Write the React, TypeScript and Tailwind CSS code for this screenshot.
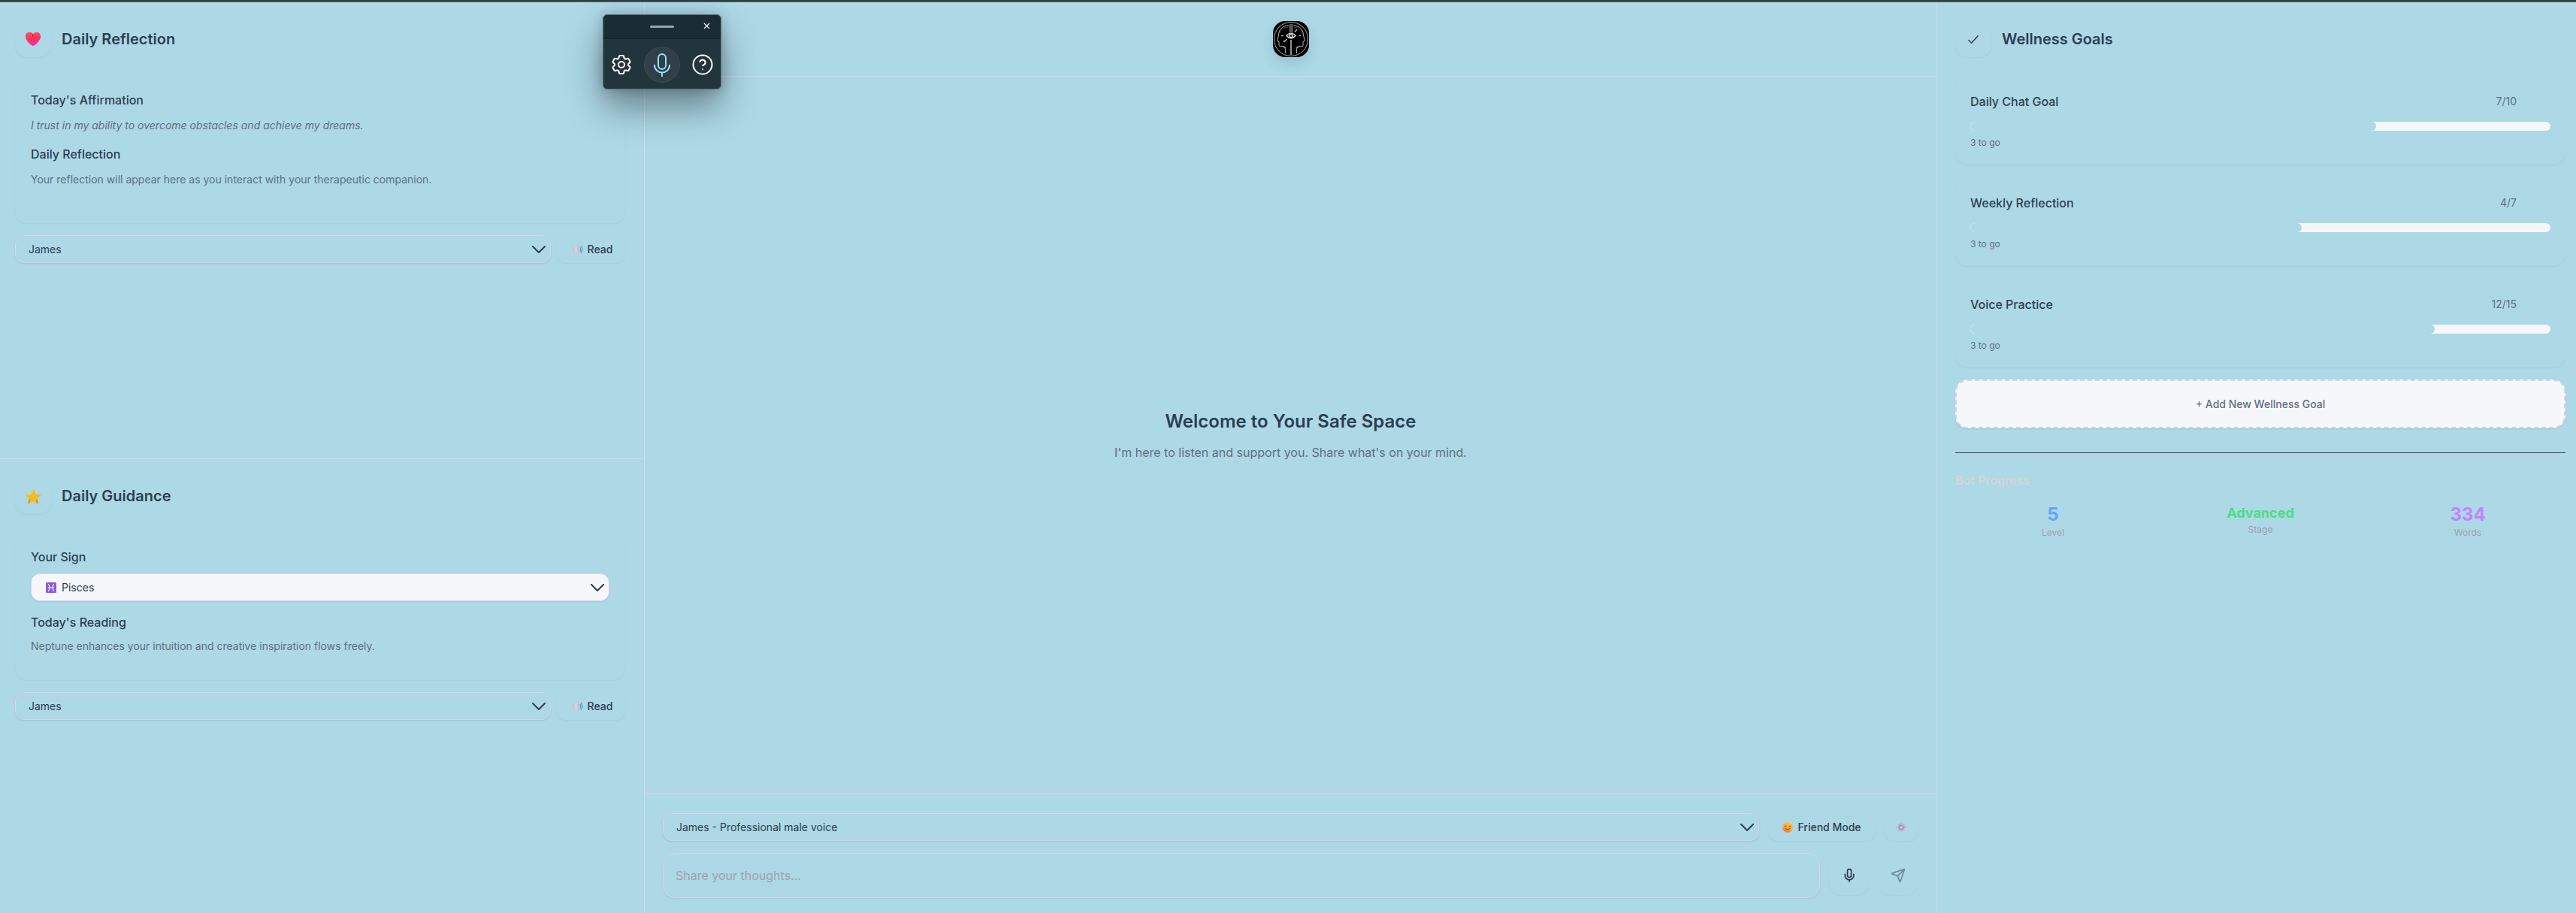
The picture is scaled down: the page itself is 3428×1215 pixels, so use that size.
import { useState, type ReactNode } from "react";
import { Mic, Send, CircleHelp, X } from "lucide-react";
import { HiOutlineCog6Tooth } from "react-icons/hi2";

const SOFT = "shadow-[0_1px_2px_rgba(44,62,80,0.05)]";

function Chevron() {
  return (
    <svg viewBox="0 0 18 10" className="pointer-events-none absolute top-1/2 right-[7px] h-[10px] w-[18px] -translate-y-1/2" fill="none" stroke="#2c3e50" strokeWidth="2" strokeLinecap="round" strokeLinejoin="round">
      <path d="M1 1l8 8 8-8" />
    </svg>
  );
}

function Speaker() {
  return (
    <svg viewBox="0 0 14 14" className="h-[14px] w-[14px]">
      <defs>
        <linearGradient id="cone" x1="0" x2="1">
          <stop offset="0" stopColor="#c3bccb" />
          <stop offset="0.5" stopColor="#dcd2dd" />
          <stop offset="1" stopColor="#c6bccb" />
        </linearGradient>
      </defs>
      <path d="M0 4.8Q0 4 .8 4H3l4-3.2q1.4-.8 1.4.6v11.2q0 1.4-1.4.6L3 10H.8Q0 10 0 9.2z" fill="url(#cone)" />
      <path d="M10 4.500q1.500 2.500 0 5M11.200 2.500q3 4.500 0 9" fill="none" stroke="#4d9ff0" strokeWidth="1.3" strokeLinecap="round" />
    </svg>
  );
}

function Heart() {
  return (
    <svg viewBox="0 0 20 18" className="h-[18px] w-5">
      <defs>
        <linearGradient id="heart" x1="0.3" y1="0" x2="0.5" y2="1">
          <stop offset="0" stopColor="#fb4f5c" />
          <stop offset="0.5" stopColor="#f9335f" />
          <stop offset="1" stopColor="#f52fa6" />
        </linearGradient>
      </defs>
      <path d="M10 2.300C8.500 0 6.700 0 5 0 1.800 0 0 2.200 0 5.400 0 10.500 5.500 15.600 8.500 17.500q1.500.8 3 0C14.500 15.600 20 10.500 20 5.400 20 2.200 18.200 0 15 0c-1.700 0-3.500 0-5 2.300z" fill="url(#heart)" />
      <path d="M10 2.300q1 2.200-.2 4.200-2-2.500.2-4.200z" fill="#c81f3c" />
    </svg>
  );
}

function Star() {
  return (
    <svg viewBox="0 0 22 21" className="h-[21px] w-[22px]">
      <path d="M11 1.200c.6 0 1 .4 1.300 1.100l2.100 4.900 5.400.5c1.500.2 1.800 1.300.8 2.200l-4.100 3.600 1.300 5.300c.3 1.400-.7 2-1.800 1.300L11 17.300l-5 2.800c-1.100.7-2.100.1-1.800-1.300l1.300-5.300-4.100-3.600c-1-.9-.7-2 .8-2.200l5.400-.5 2.100-4.900C10 1.600 10.400 1.200 11 1.200z" fill="#edbe2c" />
      <path d="M4.300 18.600l1.200-5.100 2 1.500-1.200 4.800c-1.200.7-2.200.1-2-1.200zM17.700 18.600l-1.200-5.100-1.800 2 .9 4.600c1.100.6 2.300 0 2.100-1.500z" fill="#d99a1c" />
      <path d="M10.800 2.500L8.600 7.800l-5.300.7" fill="none" stroke="#ffd95a" strokeWidth="1" />
    </svg>
  );
}

function Check() {
  return (
    <svg viewBox="0 0 14 11" className="h-[11px] w-[14px]" fill="none" stroke="#2c3e50" strokeLinecap="round" strokeLinejoin="round">
      <path d="M1 6.500l3.500 3.700L13 1" strokeWidth="1.4" />
    </svg>
  );
}

function Smile() {
  return (
    <svg viewBox="0 0 14 14" className="h-[14px] w-[14px]">
      <defs>
        <linearGradient id="face" x1="0.7" y1="0" x2="0.3" y2="1">
          <stop offset="0" stopColor="#fdc93c" />
          <stop offset="0.6" stopColor="#fbab3a" />
          <stop offset="1" stopColor="#f4694f" />
        </linearGradient>
      </defs>
      <circle cx="7" cy="7" r="7" fill="url(#face)" />
      <path d="M2.800 5.600q1.200-1.800 2.400 0M8.800 5.600q1.200-1.800 2.400 0M4 8.800q3 2.400 6 0" fill="none" stroke="#5a2b1a" strokeWidth="0.9" strokeLinecap="round" />
    </svg>
  );
}

function GearEmoji() {
  return (
    <svg viewBox="0 0 16 16" className="h-4 w-4">
      <path d="M8 2v12M2 8h12M3.800 3.800l8.400 8.400M12.200 3.800l-8.400 8.400" stroke="#cfb4d8" strokeWidth="2.2" strokeLinecap="round" />
      <circle cx="8" cy="8" r="5" fill="#c8abd1" />
      <circle cx="8" cy="8" r="3.3" fill="#9a90ad" />
      <circle cx="8" cy="8" r="2" fill="#b6d3e4" />
    </svg>
  );
}

function PiscesSign() {
  return (
    <svg viewBox="0 0 14 14" className="pointer-events-none absolute top-1/2 left-[20px] h-[14px] w-[14px] -translate-y-1/2">
      <rect width="14" height="14" rx="1.5" fill="#8d5be3" />
      <path d="M3.500 2.500q3 4.500 0 9M10.500 2.500q-3 4.500 0 9M3.500 7h7" fill="none" stroke="#fff" strokeWidth="1.1" strokeLinecap="round" />
    </svg>
  );
}

function Logo() {
  return (
    <svg viewBox="0 0 48 48" role="img" aria-label="Two faces and an eye" className="h-12 w-12 rounded-2xl shadow-[0_8px_16px_rgba(44,62,80,0.14)]">
      <rect width="48" height="48" fill="#000" />
      <g fill="none" stroke="#b4b4b4" strokeWidth="1" strokeLinejoin="round">
        <circle cx="24" cy="24" r="22.500" />
        <path d="M21 6C12 6 7.500 12 7.500 19l-2 7.500 2.500.8v4.500q0 2 2 2l4-.5q3 1 2.500 5V43" />
        <path d="M27 6c9 0 13.500 6 13.500 13l2 7.500-2.500.8v4.500q0 2-2 2l-4-.5q-3 1-2.500 5V43" />
        <path d="M18 34q-2 3-5 .5M30 34q2 3 5 .5" strokeWidth=".8" />
        <path d="M11 19.500h2.500M34.500 19.500H37M15.500 27l3-3M29 14.500l3-3.500" strokeWidth="1.500" />
        <circle cx="15" cy="27" r="1" />
        <path d="M9 17q1-8 11-9M39 17q-1-8-11-9" stroke="#555" strokeWidth=".7" />
      </g>
      <path d="M22 4h1.500v11H22zM24.500 4H26v11h-1.500zM23 25h2v20h-2z" fill="#909090" />
      <path d="M18 19.500q6-7 12 0-6 7-12 0z" fill="#222" stroke="#e4e4e4" strokeWidth="1.200" />
      <circle cx="24" cy="19.500" r="2.200" fill="none" stroke="#eee" strokeWidth="1.200" />
    </svg>
  );
}

function PanelHeading({ icon, children }: { icon: ReactNode; children: ReactNode }) {
  return (
    <div className="mb-6 flex items-center gap-[14px]">
      <div className={`flex h-12 w-12 shrink-0 items-center justify-center rounded-2xl ${SOFT}`}>{icon}</div>
      <h2 className="text-xl font-semibold">{children}</h2>
    </div>
  );
}

function Select({ label, value, filled, sign }: { label: string; value: string; filled?: boolean; sign?: boolean }) {
  return (
    <div className="relative min-w-0 flex-1">
      {sign && <PiscesSign />}
      <select
        aria-label={label}
        defaultValue={value}
        className={`block h-[37px] w-full appearance-none rounded-xl border border-[#d6d3ee] pr-8 text-sm leading-5 shadow-[0_1px_2px_rgba(44,62,80,0.1)] ${filled ? "bg-[#f5f7fb]" : "bg-[#add8e6]"} ${sign ? "pl-[40px]" : "pl-[17px]"}`}
      >
        <option>{value}</option>
      </select>
      <Chevron />
    </div>
  );
}

function ReadRow({ label }: { label: string }) {
  return (
    <div className="mt-4 flex items-stretch gap-2">
      <Select label={label} value="James" />
      <button className={`flex w-[91px] items-center justify-center gap-[6px] rounded-xl pl-1 text-sm font-medium ${SOFT}`}>
        <Speaker />
        Read
      </button>
    </div>
  );
}

function Goal({ title, done, total }: { title: string; done: number; total: number }) {
  return (
    <div className={`mb-4 rounded-2xl px-5 pt-5 pb-[21px] ${SOFT}`}>
      <div className="mb-3 flex h-[30px] items-center justify-between pr-[45px]">
        <h3 className="text-base font-medium">{title}</h3>
        <span className="text-sm text-[#5f6f82]">
          {done}/{total}
        </span>
      </div>
      <div className="h-3 overflow-hidden rounded-full bg-[#f5f7fb]">
        <div className="h-full rounded-full bg-[#add8e6]" style={{ width: `${(done / total) * 100}%` }} />
      </div>
      <p className="mt-2 text-xs text-[#5f6f82]">{total - done} to go</p>
    </div>
  );
}

function Stat({ value, name, className }: { value: string; name: string; className: string }) {
  return (
    <div className="text-center">
      <div className={`font-bold ${className}`}>{value}</div>
      <div className="text-xs text-[#9ca3af]">{name}</div>
    </div>
  );
}

function VoiceWidget() {
  return (
    <div className="absolute top-[19px] left-[802px] h-[100px] w-[158px] rounded-md border border-[#5f7379] bg-[#22343c] shadow-[0_24px_48px_rgba(0,0,0,0.4),0_0_16px_rgba(0,0,0,0.2)]">
      <div className="relative flex h-8 items-center justify-center rounded-t-md border-b border-[#15242b] bg-[#1a2d35]">
        <span className="h-[3px] w-8 rounded-full bg-[#99a3a9]" />
        <button aria-label="Close" className="absolute top-2 right-3">
          <X className="h-[13px] w-[13px] text-white" strokeWidth={2} />
        </button>
      </div>
      <div className="flex h-[68px] items-center justify-between px-2 text-white">
        <button aria-label="Settings" className="flex w-8 justify-center">
          <HiOutlineCog6Tooth className="h-8 w-8" />
        </button>
        <button aria-label="Dictate" className="flex h-12 w-12 items-center justify-center rounded-full border border-[#3b4b54] bg-[#303f48]">
          <svg viewBox="0 0 24 32" className="h-8 w-6" fill="none" stroke="#93e3f8" strokeWidth="2">
            <rect x="7" y="2" width="10" height="20" rx="5" />
            <path d="M2 16v1a10 9.500 0 0 0 20 0v-1M12 26.500V32" />
          </svg>
        </button>
        <button aria-label="Help" className="flex w-8 justify-center">
          <CircleHelp className="h-[30px] w-[30px]" strokeWidth={1.6} />
        </button>
      </div>
    </div>
  );
}

export default function App() {
  const [message, setMessage] = useState("");
  return (
    <div className="relative flex min-h-screen flex-col bg-[#add8e6] font-['Inter',sans-serif] text-[#2c3e50]">
      <div className="h-[3px] border-b-2 border-[#43504f] bg-[#253f3c]" />
      <div className="grid flex-1 grid-cols-[858fr_1720fr_850fr]">
        <aside className="grid grid-rows-[608fr_604fr] border-r border-[#cfd6ee]">
          <section className="border-b border-[#d6d3ee] pt-[25px] pr-[25px] pl-5">
            <PanelHeading icon={<Heart />}>Daily Reflection</PanelHeading>
            <div className={`h-[197px] rounded-2xl px-[21px] pt-[21px] ${SOFT}`}>
              <h3 className="mb-[10px] text-base font-medium">Today's Affirmation</h3>
              <p className="mb-[14px] text-sm leading-6 text-[#5f6f82] italic">I trust in my ability to overcome obstacles and achieve my dreams.</p>
              <h3 className="mb-[10px] text-base font-medium">Daily Reflection</h3>
              <p className="text-sm leading-6 text-[#5f6f82]">Your reflection will appear here as you interact with your therapeutic companion.</p>
            </div>
            <ReadRow label="Reflection voice" />
          </section>
          <section className="pt-[25px] pr-[25px] pl-5">
            <PanelHeading icon={<Star />}>Daily Guidance</PanelHeading>
            <div className={`h-[197px] rounded-2xl px-[21px] pt-[21px] ${SOFT}`}>
              <h3 className="mb-[10px] text-base font-medium">Your Sign</h3>
              <Select label="Your Sign" value="Pisces" filled sign />
              <h3 className="mt-4 mb-2 text-base font-medium">Today's Reading</h3>
              <p className="text-sm leading-6 text-[#5f6f82]">Neptune enhances your intuition and creative inspiration flows freely.</p>
            </div>
            <ReadRow label="Guidance voice" />
          </section>
        </aside>

        <main className="flex flex-col border-r border-[#cfd6ee]">
          <header className="flex h-[99px] items-center justify-center border-b border-[#cfd6ee]">
            <Logo />
          </header>
          <div className="flex flex-1 flex-col items-center justify-center gap-[13px]">
            <h1 className="text-2xl font-semibold">Welcome to Your Safe Space</h1>
            <p className="text-base text-[#5f6f82]">I'm here to listen and support you. Share what's on your mind.</p>
          </div>
          <footer className="flex flex-col gap-4 border-t border-[#d6d3ee] pt-[25px] pr-[25px] pb-5 pl-6">
            <div className="flex items-stretch gap-3">
              <Select label="Voice" value="James - Professional male voice" />
              <button className={`flex w-[143px] items-center justify-center gap-[6px] rounded-xl text-sm font-medium ${SOFT}`}>
                <Smile />
                Friend Mode
              </button>
              <button aria-label="Settings" className={`flex w-11 items-center justify-center rounded-xl ${SOFT}`}>
                <GearEmoji />
              </button>
            </div>
            <form className="flex items-center gap-3" onSubmit={(e) => e.preventDefault()}>
              <input
                aria-label="Message"
                value={message}
                onChange={(e) => setMessage(e.target.value)}
                placeholder="Share your thoughts..."
                className="h-[60px] min-w-0 flex-1 rounded-2xl border border-[#d6d3ee] bg-[#add8e6] px-4 text-base shadow-[0_1px_2px_rgba(44,62,80,0.08)] placeholder:text-[#9ca3af]"
              />
              <button type="button" aria-label="Record" className={`flex h-[52px] w-[53px] items-center justify-center rounded-2xl ${SOFT}`}>
                <Mic className="h-5 w-5" strokeWidth={2} />
              </button>
              <button aria-label="Send" className={`flex h-[52px] w-[53px] items-center justify-center rounded-2xl opacity-50 ${SOFT}`}>
                <Send className="h-5 w-5" strokeWidth={2} />
              </button>
            </form>
          </footer>
        </main>

        <aside className="pt-[25px] pr-[14px] pl-6">
          <PanelHeading icon={<Check />}>Wellness Goals</PanelHeading>
          <Goal title="Daily Chat Goal" done={7} total={10} />
          <Goal title="Weekly Reflection" done={4} total={7} />
          <Goal title="Voice Practice" done={12} total={15} />
          <button className="h-[65px] w-full rounded-2xl border-2 border-dashed border-[#d6d3ee] bg-[#f5f7fb] text-sm font-medium text-[#5f6f82] shadow-[0_1px_2px_rgba(44,62,80,0.12)]">
            + Add New Wellness Goal
          </button>
          <div className="mt-8 border-t border-[#404040] pt-6">
            <h3 className="mb-[18px] text-base font-semibold text-[#d1d5db]">Bot Progress</h3>
            <div className="grid grid-cols-3 gap-4">
              <Stat value="5" name="Level" className="text-2xl text-[#60a5fa]" />
              <Stat value="Advanced" name="Stage" className="text-lg text-[#4ade80]" />
              <Stat value="334" name="Words" className="text-2xl text-[#c084fc]" />
            </div>
          </div>
        </aside>
      </div>
      <VoiceWidget />
    </div>
  );
}
